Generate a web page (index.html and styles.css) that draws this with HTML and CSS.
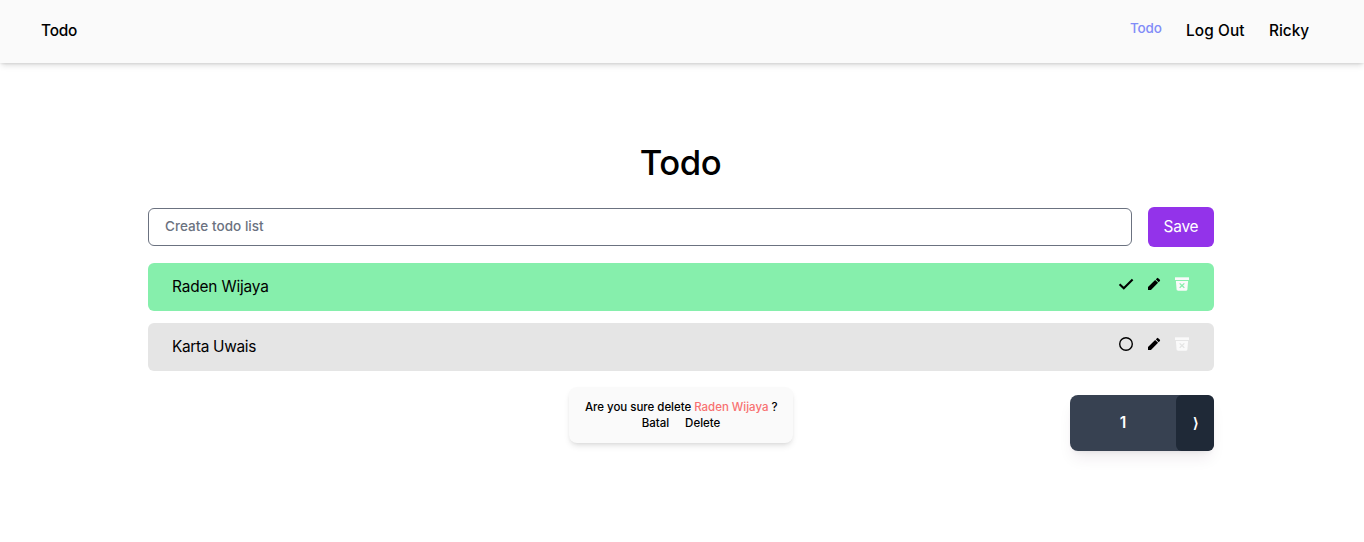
FILE: index.html
```html
<!DOCTYPE html>
<html lang="en">
<head>
<meta charset="utf-8">
<title>Todo</title>
<link rel="stylesheet" href="styles.css">
</head>
<body>
<svg class="sprite" aria-hidden="true">
  <symbol id="check" viewBox="0 0 16 16"><path d="M1.6 8.2l4.2 4.1L14.6 3.6" fill="none" stroke="currentColor" stroke-width="2.1"/></symbol>
  <symbol id="circle" viewBox="0 0 16 16"><circle cx="8" cy="8" r="6.3" fill="none" stroke="currentColor" stroke-width="1.4"/></symbol>
  <symbol id="pencil" viewBox="0 0 24 24"><path fill="currentColor" d="M3 16.6V21h4.4L18.1 10.3l-4.4-4.4L3 16.6zM20.8 7.4a1.2 1.2 0 0 0 0-1.7l-2.5-2.5a1.2 1.2 0 0 0-1.7 0l-1.9 1.8 4.3 4.3 1.8-1.9z"/></symbol>
  <symbol id="trash" viewBox="0 0 16 16"><path fill="currentColor" d="M1 1.3h14V4H1z"/><path fill="currentColor" fill-rule="evenodd" d="M1.9 5h12.2l-.7 8.6c-.1.8-.6 1.2-1.3 1.2H3.9c-.7 0-1.2-.4-1.3-1.2zM6.1 6.9l-.9.9L7 9.6l-1.8 1.8.9.9L8 10.5l1.9 1.8.9-.9L9 9.6l1.8-1.8-.9-.9L8 8.7z"/></symbol>
</svg>
<header class="navbar">
  <a class="brand">Todo</a>
  <nav class="links">
    <a class="link-active">Todo</a>
    <a class="link-logout">Log Out</a>
    <a class="link-user">Ricky</a>
  </nav>
</header>
<main class="content">
  <h1 class="title">Todo</h1>
  <form class="create">
    <input class="field" type="text" placeholder="Create todo list">
    <button class="save" type="button">Save</button>
  </form>
  <ul class="list">
    <li class="item done">
      <span class="name">Raden Wijaya</span>
      <span class="actions"><svg><use href="#check"/></svg><svg><use href="#pencil"/></svg><svg class="remove"><use href="#trash"/></svg></span>
    </li>
    <li class="item">
      <span class="name name-short">Karta Uwais</span>
      <span class="actions"><svg><use href="#circle"/></svg><svg><use href="#pencil"/></svg><svg class="remove"><use href="#trash"/></svg></span>
    </li>
  </ul>
  <div class="footer">
    <section class="confirm">
      <p class="question">Are you sure delete <span class="target">Raden Wijaya</span> ?</p>
      <div class="choices"><a>Batal</a><a>Delete</a></div>
    </section>
    <div class="pager"><span class="page">1</span><span class="next">⟩</span></div>
  </div>
</main>
</body>
</html>
```
FILE: styles.css
```css
* { box-sizing: border-box; margin: 0; padding: 0; }
body { min-height: 100vh; background: #fff; color: #000; font-family: Inter, "Liberation Sans", sans-serif; font-size: 15.4px; line-height: 24px; }
.sprite { display: none; }
.navbar { display: flex; justify-content: space-between; height: 63px; padding: 19px 55px 0 41px; background: #fafafa; font-weight: 500; white-space: nowrap; box-shadow: 0 4px 6px -1px rgba(0,0,0,.1), 0 2px 4px -2px rgba(0,0,0,.1), 0 1px 2px rgba(0,0,0,.05); }
.brand { letter-spacing: -.2px; }
.links { display: flex; gap: 24px; }
.link-active { width: 32px; font-size: 13.5px; line-height: 18px; font-weight: 550; color: #818cf8; letter-spacing: -.15px; }
.link-logout { width: 59px; letter-spacing: .1px; }
.link-user { width: 40px; }
.content { width: 1066px; margin: 0 0 0 148px; padding-top: 79px; }
.title { padding-right: 1px; font-size: 34.7px; line-height: 40px; font-weight: 500; text-align: center; letter-spacing: -.4px; }
.create { display: flex; align-items: center; gap: 16px; margin-top: 25px; }
.field { flex: 1; height: 38px; padding: 0 16px 2px; border: 1px solid #6b7280; border-radius: 6px; background: #fff; font: 500 13.5px/20px Inter, sans-serif; letter-spacing: .05px; }
.field::placeholder { color: #6b7280; opacity: 1; }
.save { width: 66px; height: 40px; border: 0; border-radius: 6px; background: #9333ea; color: #fff; font: 400 15.4px/24px Inter, sans-serif; letter-spacing: -.2px; }
.list { display: grid; gap: 12px; margin-top: 16px; list-style: none; }
.item { display: flex; justify-content: space-between; height: 48px; padding: 12px 24px; border-radius: 6px; background: #e5e5e5; }
.done { background: #86efac; }
.name { letter-spacing: -.15px; }
.name-short { letter-spacing: -.33px; }
.actions { display: flex; gap: 12px; padding-top: 1px; }
.actions svg { width: 16px; height: 16px; }
.actions .remove { color: #fafafa; }
.footer { display: grid; grid-template-columns: 1fr 224px 1fr; margin-top: 16px; }
.confirm { grid-column: 2; height: 56px; padding: 12px 16px; border-radius: 8px; background: #fafafa; font-size: 11.5px; line-height: 16px; font-weight: 500; text-align: center; white-space: nowrap; box-shadow: 0 4px 6px -1px rgba(0,0,0,.1), 0 2px 4px -2px rgba(0,0,0,.1); }
.question { letter-spacing: -.03px; }
.target { color: #f87171; }
.choices { display: flex; justify-content: center; gap: 16px; }
.pager { grid-column: 3; justify-self: end; display: flex; width: 144px; height: 56px; margin-top: 8px; border-radius: 8px; background: #374151; color: #fff; font-weight: 600; line-height: 56px; text-align: center; box-shadow: 0 10px 15px -3px rgba(60,20,60,.08), 0 4px 6px -4px rgba(0,0,0,.1); }
.page { flex: 1; }
.next { width: 38px; border-radius: 6px; background: #1f2937; font-size: 14px; }
```
